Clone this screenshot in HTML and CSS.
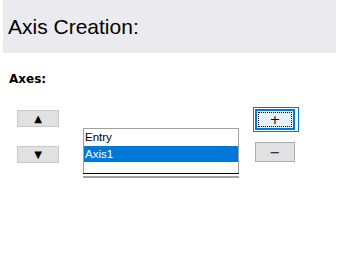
FILE: index.html
```html
<!DOCTYPE html>
<html>
<head>
<meta charset="utf-8">
<link rel="stylesheet" href="styles.css">
</head>
<body>
<header class="header"><h1 class="title">Axis Creation:</h1></header>
<div class="label">Axes:</div>
<div class="row">
  <div class="col-left">
    <button class="btn arrow">&#9650;</button>
    <button class="btn arrow down">&#9660;</button>
  </div>
  <div class="listwrap">
    <div class="list">
      <div class="item">Entry</div>
      <div class="item selected">Axis1</div>
    </div>
    <div class="line-black"></div>
    <div class="line-grey"></div>
  </div>
  <div class="col-right">
    <div class="focus-ring"><button class="btn plus"><span class="dots">+</span></button></div>
    <button class="btn minus">&minus;</button>
  </div>
</div>
</body>
</html>
```
FILE: styles.css
```css
html, body { margin: 0; padding: 0; background: #fff; }
body { width: 337px; height: 254px; overflow: hidden; font-family: "Liberation Sans", Arial, sans-serif; }
.header { margin-left: 3px; margin-right: 1px; height: 53px; background: #ebebef; display: flex; align-items: center; padding-left: 5px; }
.title { margin: 0; font-weight: normal; font-size: 21px; line-height: 24px; color: #000; }
.label { margin: 19px 0 0 9px; font-family: "DejaVu Sans", sans-serif; font-weight: bold; font-size: 12px; line-height: 14px; color: #000; }
.row { display: flex; align-items: flex-start; margin-top: 21px; padding-left: 17px; }
.col-left { display: flex; flex-direction: column; gap: 19px; margin-top: 3px; width: 42px; }
.btn { box-sizing: border-box; padding: 0; margin: 0; font-family: "DejaVu Sans", sans-serif; color: #000; background: #e1e1e1; border: 1px solid #c9c9c9; display: flex; align-items: center; justify-content: center; }
.arrow { width: 42px; height: 17px; font-size: 10px; line-height: 10px; }
.listwrap { margin-left: 24px; margin-top: 21px; width: 156px; }
.list { box-sizing: border-box; height: 45px; border: 1px solid #a0a0a0; border-bottom: none; }
.item { height: 16px; line-height: 16px; font-size: 11.5px; padding-left: 1px; color: #000; }
.item:first-child { height: 17px; line-height: 17px; }
.selected { background: #0078d7; color: #fff; }
.line-black { height: 1px; background: #000; }
.line-grey { height: 2px; background: #a0a0a0; margin-top: 2px; }
.col-right { display: flex; flex-direction: column; margin-left: 14px; }
.focus-ring { border: 1px solid #0078d7; padding: 1px; width: 42px; }
.plus { width: 40px; height: 21px; background: #e5f1fb; border: 2px solid #0078d7; font-size: 13px; }
.dots { box-sizing: border-box; width: 34px; height: 15px; border: 1px dotted #000; display: flex; align-items: center; justify-content: center; line-height: 13px; }
.minus { margin-top: 10px; margin-left: 2px; width: 40px; height: 20px; border-color: #adadad; font-size: 13px; }
```
